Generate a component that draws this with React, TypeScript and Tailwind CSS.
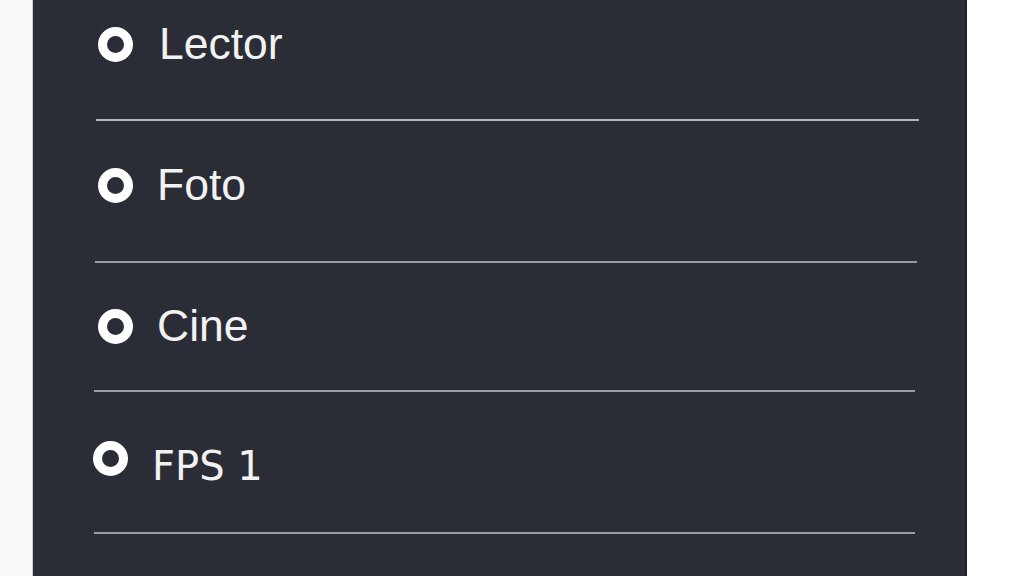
const Radio = ({ className = "" }: { className?: string }) => (
  <span
    className={`block w-[35px] h-[35px] shrink-0 rounded-full border-[9px] border-white ${className}`}
  />
);

const Divider = ({ className }: { className: string }) => (
  <div className={`h-[2px] shrink-0 ${className}`} />
);

export default function App() {
  return (
    <div className="w-[1024px] h-[576px] overflow-hidden bg-white flex">
      {/* left edge shadow */}
      <div className="w-[32px] h-full bg-[#fafaf8] shrink-0" />
      <div className="w-[1px] h-full bg-[#cfd0d0] shrink-0" />

      {/* Menu panel */}
      <div className="w-[932px] h-full bg-[#2a2d35] flex flex-col shrink-0 font-['Liberation_Sans',Arial,sans-serif] text-[44.5px] leading-[44px] text-[#f2f2f2]">
        <div className="flex items-center h-[44px] mt-[22px] pl-[65px] gap-[26px] shrink-0">
          <Radio />
          <span>Lector</span>
        </div>
        <Divider className="mt-[53px] ml-[63px] w-[823px] bg-[#b4b6ba]" />

        <div className="flex items-center h-[44px] mt-[42px] pl-[65px] gap-[24px] shrink-0">
          <Radio />
          <span>Foto</span>
        </div>
        <Divider className="mt-[54px] ml-[62px] w-[822px] bg-[#9a9ca1]" />

        <div className="flex items-center h-[44px] mt-[41px] pl-[65px] gap-[24px] shrink-0">
          <Radio />
          <span>Cine</span>
        </div>
        <Divider className="mt-[42px] ml-[61px] w-[821px] bg-[#9a9ca1]" />

        <div className="flex items-center h-[44px] mt-[52px] pl-[60px] gap-[24px] shrink-0">
          <Radio className="-mt-4" />
          <span className="font-['DejaVu_Sans',Verdana,sans-serif] text-[40px]">FPS 1</span>
        </div>
        <Divider className="mt-[44px] ml-[61px] w-[821px] bg-[#9a9ca1]" />
      </div>

      {/* right edge */}
      <div className="w-[2px] h-full bg-[#1f2127] shrink-0" />
      <div className="flex-1 h-full bg-white" />
    </div>
  );
}
